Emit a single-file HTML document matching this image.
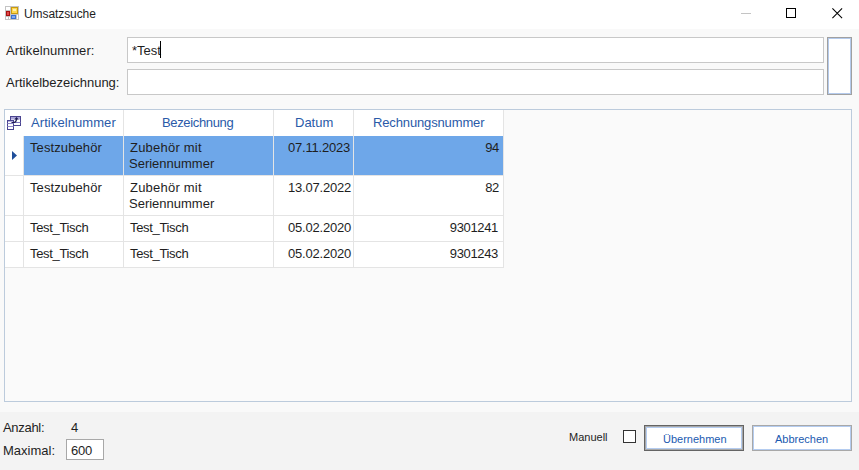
<!DOCTYPE html>
<html><head><meta charset="utf-8">
<style>
*{margin:0;padding:0;box-sizing:border-box}
html,body{width:859px;height:470px;overflow:hidden;background:#f9f9f9;font-family:"Liberation Sans",sans-serif;color:#1e1e1e}
.a{position:absolute;white-space:nowrap}
#title{left:0;top:0;width:859px;height:29px;background:#fff}
.t13{font-size:13px;line-height:16px}
.t11{font-size:11px;line-height:14px}
.tb{background:#fff;border:1px solid #c8c8c8}
.gl{background:#e4e4e4}
.hd{color:#2a5aa8}
.dt{letter-spacing:-0.2px}
.nm{letter-spacing:-0.35px}
</style></head><body>
<div id="title" class="a"></div>
<!-- app icon -->
<svg class="a" style="left:0;top:0" width="24" height="24" viewBox="0 0 24 24" shape-rendering="crispEdges">
<rect x="5" y="6" width="14" height="14" fill="#c4c4c4"/>
<rect x="6" y="7" width="4" height="3" fill="#fff"/>
<rect x="6" y="11" width="4" height="5" fill="#a81010"/>
<rect x="7" y="12" width="2" height="3" fill="#e04848"/>
<rect x="6" y="17" width="2" height="2" fill="#fff"/>
<rect x="9" y="17" width="1" height="2" fill="#fff"/>
<rect x="11" y="7" width="7" height="7" fill="#c89a10"/>
<rect x="12" y="8" width="5" height="5" fill="#ffd850"/>
<rect x="13" y="9" width="3" height="2" fill="#fff0b0"/>
<rect x="11" y="15" width="5" height="4" fill="#3a70d0"/>
<rect x="12" y="16" width="3" height="2" fill="#80a8f0"/>
<rect x="17" y="15" width="1" height="4" fill="#fff"/>
</svg>
<div class="a" style="left:24px;top:6px;font-size:12px;line-height:16px;letter-spacing:-0.08px">Umsatzsuche</div>
<!-- window controls -->
<div class="a" style="left:741px;top:13px;width:10px;height:1px;background:#c4c4c4"></div>
<div class="a" style="left:786px;top:8px;width:10px;height:10px;border:1px solid #000"></div>
<svg class="a" style="left:831px;top:7px" width="13" height="13" viewBox="0 0 13 13"><path d="M1.4 1.4 L11.1 11.1 M11.1 1.4 L1.4 11.1" stroke="#000" stroke-width="1.05"/></svg>

<!-- labels -->
<div class="a t13" style="left:6px;top:43px;letter-spacing:0.08px">Artikelnummer:</div>
<div class="a t13" style="left:6px;top:75px">Artikelbezeichnung:</div>
<div class="a tb" style="left:127px;top:37px;width:697px;height:26px"></div>
<div class="a tb" style="left:127px;top:69px;width:697px;height:26px"></div>
<div class="a t13" style="left:132px;top:43px">*Test</div>
<div class="a" style="left:160px;top:41px;width:1px;height:17px;background:#000"></div>
<!-- side button -->
<div class="a" style="left:827px;top:37px;width:25px;height:58px;border:1px solid #a0a0a0;background:#fff"><div style="width:100%;height:100%;border:1px solid #b4caec"></div></div>

<!-- grid -->
<div class="a" style="left:4px;top:109px;width:848px;height:293px;border:1px solid #bccbdc;background:#fafafa"></div>
<div class="a" style="left:5px;top:110px;width:498px;height:157px;background:#fff"></div>
<div class="a" style="left:24px;top:136px;width:479px;height:39px;background:#6ea7e9"></div>
<!-- vertical lines -->
<div class="a gl" style="left:23px;top:136px;width:1px;height:132px"></div>
<div class="a gl" style="left:123px;top:110px;width:1px;height:158px"></div>
<div class="a gl" style="left:273px;top:110px;width:1px;height:158px"></div>
<div class="a gl" style="left:353px;top:110px;width:1px;height:158px"></div>
<div class="a gl" style="left:503px;top:110px;width:1px;height:158px"></div>
<!-- horizontal lines -->
<div class="a gl" style="left:5px;top:175px;width:499px;height:1px"></div>
<div class="a gl" style="left:5px;top:215px;width:499px;height:1px"></div>
<div class="a gl" style="left:5px;top:241px;width:499px;height:1px"></div>
<div class="a gl" style="left:5px;top:267px;width:499px;height:1px"></div>
<!-- header icon -->
<svg class="a" style="left:4px;top:112px" width="20" height="20" viewBox="0 0 20 20">
<rect x="6.5" y="4.5" width="10" height="9" fill="#fff" stroke="#4a4490"/>
<rect x="7" y="5" width="9" height="2.5" fill="#aaa4d8"/>
<line x1="6.5" y1="10.5" x2="16.5" y2="10.5" stroke="#7e78c0"/>
<rect x="3.5" y="8.5" width="6" height="9" fill="#fff" stroke="#4a4490"/>
<rect x="4" y="9" width="5" height="1" fill="#b8b2e0"/>
<line x1="3.5" y1="11.5" x2="9.5" y2="11.5" stroke="#8e88c8"/>
<line x1="3.5" y1="14.5" x2="9.5" y2="14.5" stroke="#8e88c8"/>
<path d="M7.5 10.5 L10 10.5 Q12.2 10.3 12.5 7" stroke="#1c1a50" stroke-width="1.2" fill="none"/>
<path d="M10.3 7.6 L12.5 5 L14.7 7.6 Z" fill="#1c1a50"/>
</svg>
<div class="a t13 hd" style="left:31px;top:115px;letter-spacing:0.08px">Artikelnummer</div>
<div class="a t13 hd" style="left:162px;top:115px;letter-spacing:-0.35px">Bezeichnung</div>
<div class="a t13 hd" style="left:295px;top:115px">Datum</div>
<div class="a t13 hd" style="left:373px;top:115px;letter-spacing:-0.14px">Rechnungsnummer</div>
<!-- arrow -->
<svg class="a" style="left:11px;top:150px" width="8" height="12" viewBox="0 0 8 12"><path d="M1 1 L6 5.5 L1 10 Z" fill="#1f4e9a"/></svg>
<!-- rows -->
<div class="a t13" style="left:30px;top:140px;letter-spacing:0.1px">Testzubehör</div>
<div class="a t13" style="left:130px;top:140px;letter-spacing:0.22px">Zubehör mit</div>
<div class="a t13" style="left:129px;top:156px">Seriennummer</div>
<div class="a t13 dt" style="left:288px;top:140px">07.11.2023</div>
<div class="a t13 nm" style="right:360px;top:140px">94</div>

<div class="a t13" style="left:30px;top:180px;letter-spacing:0.1px">Testzubehör</div>
<div class="a t13" style="left:130px;top:180px;letter-spacing:0.22px">Zubehör mit</div>
<div class="a t13" style="left:129px;top:196px">Seriennummer</div>
<div class="a t13 dt" style="left:288px;top:180px">13.07.2022</div>
<div class="a t13 nm" style="right:360px;top:180px">82</div>

<div class="a t13" style="left:30px;top:220px;letter-spacing:-0.33px">Test_Tisch</div>
<div class="a t13" style="left:130px;top:220px;letter-spacing:-0.33px">Test_Tisch</div>
<div class="a t13 dt" style="left:288px;top:220px">05.02.2020</div>
<div class="a t13 nm" style="right:361px;top:220px">9301241</div>

<div class="a t13" style="left:30px;top:246px;letter-spacing:-0.33px">Test_Tisch</div>
<div class="a t13" style="left:130px;top:246px;letter-spacing:-0.33px">Test_Tisch</div>
<div class="a t13 dt" style="left:288px;top:246px">05.02.2020</div>
<div class="a t13 nm" style="right:361px;top:246px">9301243</div>

<!-- bottom panel -->
<div class="a" style="left:0;top:412px;width:859px;height:58px;background:#f3f3f3"></div>
<div class="a t13" style="left:3px;top:420px;letter-spacing:-0.3px">Anzahl:</div>
<div class="a t13" style="left:71px;top:420px">4</div>
<div class="a t13" style="left:3px;top:443px">Maximal:</div>
<div class="a" style="left:66px;top:439px;width:38px;height:21px;border:1px solid #a8a8a8;background:#fff"></div>
<div class="a t13" style="left:71px;top:443px;letter-spacing:-0.2px">600</div>
<div class="a t11" style="left:569px;top:430px">Manuell</div>
<div class="a" style="left:623px;top:430px;width:13px;height:13px;border:1px solid #333;background:#fff"></div>
<div class="a" style="left:644px;top:425px;width:100px;height:26px;border:1px solid #646464;background:#fff"><div style="width:100%;height:100%;border:1px solid #a8a8a8"><div style="width:100%;height:100%;border:1px solid #b4ccf0"></div></div></div>
<div class="a t11" style="left:663px;top:432px;color:#1a5ab0">Übernehmen</div>
<div class="a" style="left:752px;top:425px;width:100px;height:26px;border:1px solid #a8a8a8;background:#fff"><div style="width:100%;height:100%;border:1px solid #b4ccf0"></div></div>
<div class="a t11" style="left:775px;top:432px;color:#1a5ab0">Abbrechen</div>
</body></html>
